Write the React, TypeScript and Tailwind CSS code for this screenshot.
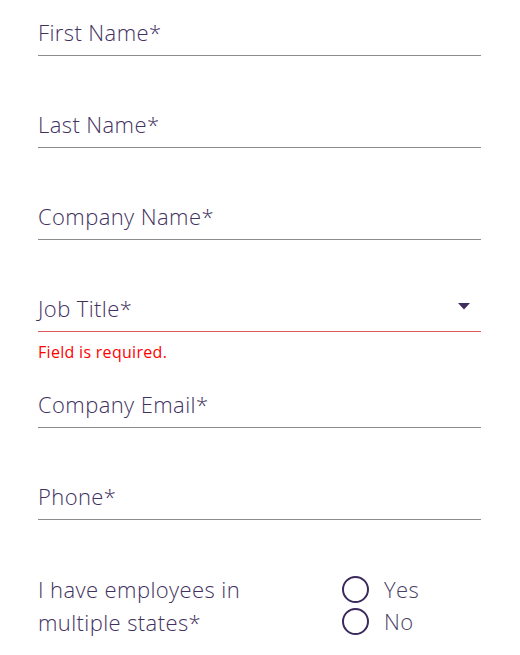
import React from "react";

const font = "[font-family:'Open_Sans',Lato,sans-serif]";
const labelCls = `text-[22px] leading-[28px] font-[350] tracking-[0.4px] text-[#3f3160] ${font}`;

function Field({ label, error, dropdown, className = "" }: { label: string; error?: boolean; dropdown?: boolean; className?: string }) {
  return (
    <div
      className={`h-[56px] flex items-start justify-between pt-[18px] border-b ${
        error ? "border-[#e05858]" : "border-[#8c8c8c]"
      } ${className}`}
    >
      <span className={labelCls}>{label}</span>
      {dropdown && (
        <svg width="12" height="7" viewBox="0 0 12 7" className="mt-[9px] mr-[11px]">
          <path d="M0 0 L12 0 L6 6.5 Z" fill="#3f2d62" />
        </svg>
      )}
    </div>
  );
}

function Radio({ label }: { label: string }) {
  return (
    <div className="h-[32px] flex items-center">
      <span className="w-[27px] h-[27px] rounded-full border-[2.5px] border-[#3b2a5c] box-border" />
      <span className={`${labelCls} ml-[15px] text-[#4a3e66]`}>{label}</span>
    </div>
  );
}

export default function App() {
  return (
    <div className="w-[520px] h-[655px] bg-white overflow-hidden">
      <div className="pl-[38px] pr-[39px]">
        <Field label="First Name*" />
        <Field label="Last Name*" className="mt-[36px]" />
        <Field label="Company Name*" className="mt-[36px]" />
        <Field label="Job Title*" className="mt-[36px]" error dropdown />
        <div className="h-[40px] pt-[8px]">
          <span className={`text-[16px] leading-[20px] font-normal tracking-[0.3px] text-[#ff0000] ${font}`}>
            Field is required.
          </span>
        </div>
        <Field label="Company Email*" />
        <Field label="Phone*" className="mt-[36px]" />
        <div className="flex mt-[53px]">
          <div className={`w-[255px] text-[22px] leading-[33px] font-[350] tracking-[0.4px] text-[#3f3160] ${font}`}>
            I have employees in multiple states*
          </div>
          <div className="flex flex-col ml-[49px]">
            <Radio label="Yes" />
            <Radio label="No" />
          </div>
        </div>
      </div>
    </div>
  );
}
